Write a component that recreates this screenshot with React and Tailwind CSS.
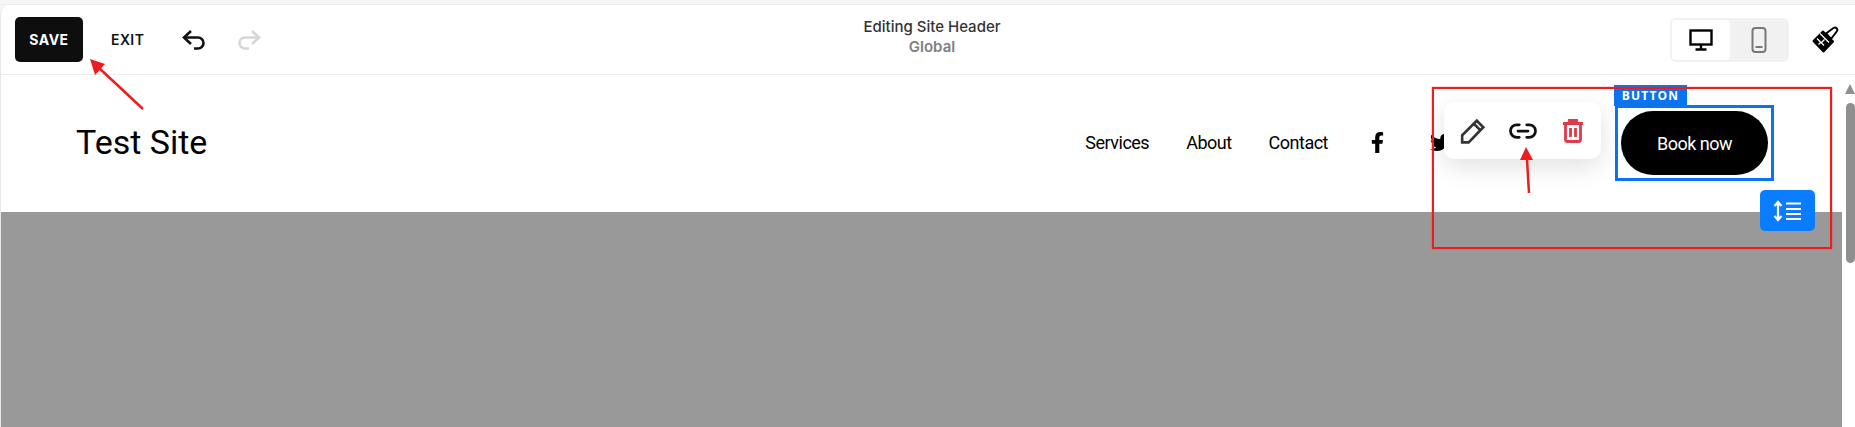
import { FaFacebookF, FaTwitter } from "react-icons/fa";
import { Link2 } from "lucide-react";

const UndoIcon = ({ className }) => (
    <svg className={className} width="24" height="22" viewBox="0 0 24 22" fill="none" stroke="currentColor" strokeWidth="2.6">
        <path d="M9 2 2 8.5 9 15" />
        <path d="M2 8.5h14a5.5 5.5 0 0 1 0 11h-4" />
    </svg>
)

const RedoIcon = ({ className }) => (
    <svg className={className} width="24" height="22" viewBox="0 0 24 22" fill="none" stroke="currentColor" strokeWidth="2.6">
        <path d="M15 2l7 6.5L15 15" />
        <path d="M22 8.5H8a5.5 5.5 0 0 0 0 11h4" />
    </svg>
)

const DesktopIcon = () => (
    <svg width="24" height="22" viewBox="0 0 24 22" fill="none" stroke="#000" strokeWidth="2.4">
        <rect x="1.500" y="1.500" width="21" height="14" />
        <path d="M12 15.500V20M6.500 20.500h11" />
    </svg>
)

const PhoneIcon = () => (
    <svg width="16" height="26" viewBox="0 0 16 26" fill="none" stroke="#777" strokeWidth="2">
        <rect x="1.500" y="1" width="13" height="24" rx="3" />
        <path d="M4.500 20h7" />
    </svg>
)

const BrushIcon = () => (
    <svg width="27" height="27" viewBox="0 0 27 27" fill="none" stroke="#000" strokeWidth="2" strokeLinejoin="round">
        <path d="M1.500 15 11 5.500 21 15.500 11.500 25.500Z" fill="#000" />
        <path d="M5 12.500 12 19.500M9 16l-2.500 2.500M12.500 13.500 9.500 16.500M8 7.500l9 9" stroke="#fff" strokeWidth="1.300" />
        <path d="M14 7.500 21.500 2c1-.7 2.500-.5 3.200.3s.8 2.200 0 3.200L19 13Z" fill="#fff" />
    </svg>
)

const PencilIcon = () => (
    <svg width="26" height="26" viewBox="0 0 24 24" fill="none" stroke="#333" strokeWidth="2.400">
        <path d="M2 22.500v-6.500L15.500 2.500l6 6L8 22.500Z" />
        <path d="M13 5.500l5.500 5.500" />
    </svg>
)

const TrashIcon = () => (
    <svg width="22" height="24" viewBox="0 0 22 24" fill="none" stroke="#e03a4a" strokeWidth="2.800">
        <path d="M1 4.500h20M7.500 4V1.500h7V4" />
        <path d="M3.500 5v15.500a2 2 0 0 0 2 2h11a2 2 0 0 0 2-2V5" />
        <path d="M8.500 9v9M13.500 9v9" />
    </svg>
)

const SpacingIcon = () => (
    <svg width="30" height="22" viewBox="0 0 30 22" fill="none" stroke="#fff" strokeWidth="2.200">
        <path d="M5 2v18M1.500 6 5 2l3.500 4M1.500 16 5 20l3.500-4" />
        <path d="M13 3.500h15M13 9h15M13 14h15M13 19h15" />
    </svg>
)

const RedArrow = ({ x1, y1, x2, y2, head }) => (
    <>
        <line x1={x1} y1={y1} x2={x2} y2={y2} stroke="#ee1c1c" strokeWidth="2.500" />
        <polygon points={head} fill="#ee1c1c" />
    </>
)

const App = () => {
    return (
        <div className="relative w-[1855px] h-[427px] overflow-hidden bg-[#f6f6f6] pt-[4px] font-['Roboto',sans-serif]">
            <div className="flex flex-col h-full bg-white rounded-tl-[10px] border-l border-[#e8e8e8]">

                <div className="relative flex items-center justify-between h-[71px] pl-[14px] pr-[16px] border-t border-b border-[#ececec] font-['Inter',sans-serif]">
                    <div className="flex items-center">
                        <button className="w-[68px] h-[45px] rounded-[5px] bg-[#0e0e0e] text-white text-[14px] font-bold tracking-[0.5px]">SAVE</button>
                        <button className="ml-[28px] text-[#111] text-[14px] font-semibold tracking-[0.4px]">EXIT</button>
                        <UndoIcon className="ml-[38px] text-[#111]" />
                        <RedoIcon className="ml-[31px] text-[#d6d6d6]" />
                    </div>

                    <div className="absolute left-[852px] top-[12px] w-[158px] text-center leading-[20px]">
                        <p className="text-[15px] font-medium text-[#333]">Editing Site Header</p>
                        <p className="text-[15px] font-semibold text-[#808080]">Global</p>
                    </div>

                    <div className="flex items-center gap-[23px]">
                        <div className="flex w-[119px] h-[44px] p-[2px] rounded-[6px] bg-[#f1f1f1]">
                            <div className="flex items-center justify-center w-[58px] bg-white rounded-[3px]"><DesktopIcon /></div>
                            <div className="flex items-center justify-center flex-1"><PhoneIcon /></div>
                        </div>
                        <BrushIcon />
                    </div>
                </div>

                <div className="flex flex-1">
                    <div className="flex-1 flex flex-col">
                        <div className="flex items-center justify-between h-[137px] pl-[75px] bg-white">
                            <h1 className="text-[34px] leading-none text-black -mt-[4px]">Test Site</h1>
                            <nav className="flex items-center mr-[391px] text-[18px] tracking-[-0.5px] text-black -mt-[2px]">
                                <span>Services</span>
                                <span className="ml-[37px]">About</span>
                                <span className="ml-[37px]">Contact</span>
                                <FaFacebookF className="ml-[39px] text-[21px]" />
                                <FaTwitter className="ml-[42px] text-[21px]" />
                            </nav>
                        </div>
                        <div className="flex-1 bg-[#999999]"></div>
                    </div>
                    <div className="relative w-[13px] bg-white">
                        <div className="absolute left-[3px] top-[9px] w-0 h-0 border-x-[5px] border-x-transparent border-b-[10px] border-b-[#8f8f8f]"></div>
                        <div className="absolute left-[4px] top-[28px] w-[9px] h-[160px] rounded-full bg-[#8f8f8f]"></div>
                    </div>
                </div>
            </div>

            {/* selected button overlay */}
            <div className="absolute left-[1444px] top-[102px] flex items-center w-[157px] h-[57px] pl-[16px] rounded-[10px] bg-white shadow-[0_8px_24px_rgba(0,0,0,0.12)]">
                <PencilIcon />
                <Link2 size={30} color="#111" strokeWidth={2.2} className="ml-[22px]" />
                <div className="ml-[24px]"><TrashIcon /></div>
            </div>

            <div className="absolute left-[1615px] top-[105px] flex items-center justify-center w-[159px] h-[76px] border-[3px] border-[#0a74ef]">
                <div className="flex items-center justify-center w-[147px] h-[64px] rounded-full bg-black text-white text-[18px] tracking-[-0.5px]">Book now</div>
            </div>
            <div className="absolute left-[1614px] top-[85px] flex items-center justify-center w-[73px] h-[21px] bg-[#0a74ef] text-white text-[12px] font-bold tracking-[1.2px] font-['Open_Sans',sans-serif]">BUTTON</div>

            <div className="absolute left-[1760px] top-[190px] flex items-center justify-center w-[55px] h-[41px] rounded-[5px] bg-[#0a7cff]"><SpacingIcon /></div>

            <div className="absolute left-[1432px] top-[87px] w-[400px] h-[162px] border-2 border-[#ee1c1c] shadow-[0_0_1px_#ee1c1c]"></div>

            <svg className="absolute inset-0 pointer-events-none" width="1855" height="427">
                <RedArrow x1={143} y1={109} x2={98} y2={67} head="90,59 105,64 95,75" />
                <RedArrow x1={1529} y1={193} x2={1527} y2={160} head="1526,147 1533,160 1520,160" />
            </svg>
        </div>
    )
}

export default App
